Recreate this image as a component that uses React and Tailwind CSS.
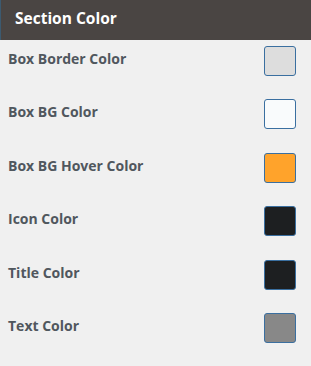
import React from "react";

const rows = [
  { label: "Box Border Color", color: "bg-[#dddddd]" },
  { label: "Box BG Color", color: "bg-[#f9fbfc]" },
  { label: "Box BG Hover Color", color: "bg-[#ffa32b]" },
  { label: "Icon Color", color: "bg-[#1d1f21]" },
  { label: "Title Color", color: "bg-[#1d1f21]" },
  { label: "Text Color", color: "bg-[#888888]" },
];

const App = () => {
  return (
    <div className="w-[311px] h-[366px] bg-[#f0f0f0] font-['Open_Sans',sans-serif] overflow-hidden">
      <div className="h-10 bg-[#4a4543] flex items-center px-[14px] border-l border-[#3c5a70]">
        <h2 className="text-white font-bold text-[15.5px] leading-none -mt-[3px]">Section Color</h2>
      </div>
      <div className="flex flex-col pt-[6px]">
        {rows.map((row) => (
          <div key={row.label} className="h-[53.4px] flex items-start justify-between pl-2 pr-[15px]">
            <span className="text-[14px] font-bold text-[#50575e] mt-[2px]">{row.label}</span>
            <div className={`w-8 h-[30px] rounded-[3px] border border-[#3a6fa0] ${row.color}`} />
          </div>
        ))}
      </div>
    </div>
  );
};

export default App;
